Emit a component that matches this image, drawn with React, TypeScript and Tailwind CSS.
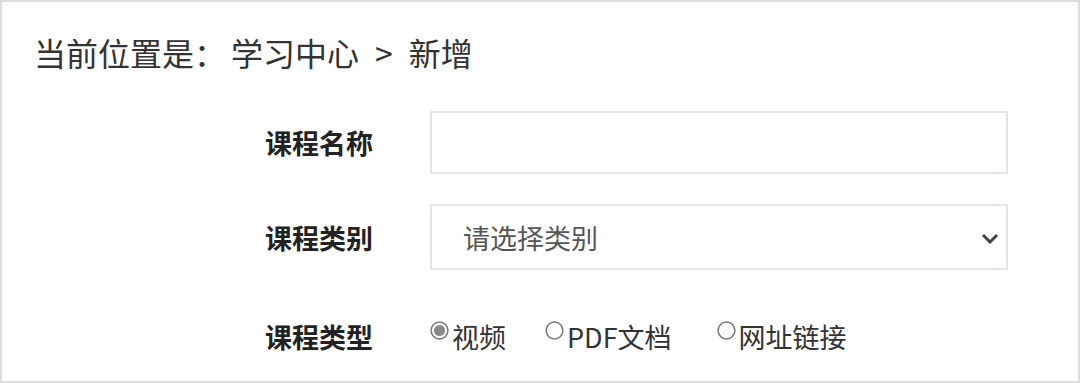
import React from "react";

const font = { fontFamily: '"Noto Sans CJK SC", "Noto Sans", sans-serif' };

function Radio({ checked, label }: { checked?: boolean; label: string }) {
  return (
    <label className="flex items-center text-[27px] text-[#333] leading-none">
      <svg width="19" height="19" viewBox="0 0 19 19" className="mr-[3px] -mt-[12px] shrink-0">
        <circle cx="9.5" cy="9.5" r="8.4" fill="white" stroke="#777" strokeWidth="1.5" />
        {checked && <circle cx="9.5" cy="9.5" r="5.6" fill="#8a8a8a" />}
      </svg>
      <span>{label}</span>
    </label>
  );
}

export default function App() {
  return (
    <div
      className="w-[1080px] h-[383px] box-border border-2 border-[#dcdcdc] bg-white overflow-hidden"
      style={font}
    >
      <div className="h-[100px] flex items-center pl-[32px] text-[32px] text-[#333] leading-none">
        <span>当前位置是：</span>
        <span className="ml-[5px]">学习中心</span>
        <span className="mx-[16px]">&gt;</span>
        <span>新增</span>
      </div>

      <div className="flex items-center pl-[263px] mt-[9px]">
        <div className="w-[165px] text-[27px] font-bold text-[#222] leading-none">课程名称</div>
        <div className="w-[578px] h-[63px] box-border border-2 border-[#e4e4ec] bg-white" />
      </div>

      <div className="flex items-center pl-[263px] mt-[30px]">
        <div className="w-[165px] text-[27px] font-bold text-[#222] leading-none">课程类别</div>
        <div className="relative w-[578px] h-[66px] box-border border-2 border-[#e4e4ec] bg-white flex items-center pl-[31px]">
          <span className="text-[27px] text-[#555] leading-none">请选择类别</span>
          <svg
            width="18"
            height="11"
            viewBox="0 0 18 11"
            className="absolute right-[7px] top-[27px]"
          >
            <path d="M2 2 L9 9 L16 2" fill="none" stroke="#444" strokeWidth="3" />
          </svg>
        </div>
      </div>

      <div className="flex items-center pl-[263px] mt-[46px] h-[40px]">
        <div className="w-[165px] text-[27px] font-bold text-[#222] leading-none">课程类型</div>
        <div className="flex items-center">
          <Radio checked label="视频" />
          <div className="ml-[39px]">
            <Radio label="PDF文档" />
          </div>
          <div className="ml-[45px]">
            <Radio label="网址链接" />
          </div>
        </div>
      </div>
    </div>
  );
}
